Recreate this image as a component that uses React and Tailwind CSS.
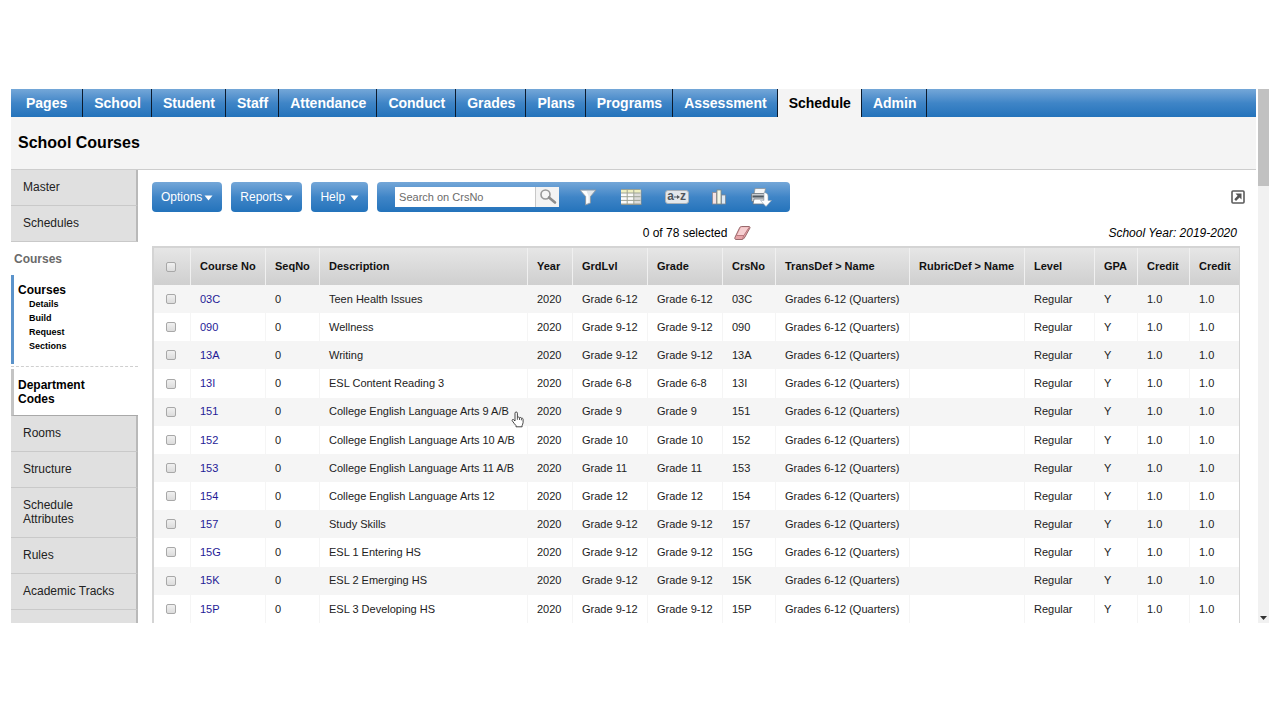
import React from "react";

const TABS = ["Pages", "School", "Student", "Staff", "Attendance", "Conduct", "Grades", "Plans", "Programs", "Assessment", "Schedule", "Admin"];

const COLUMNS = [
  ["Course No", "w-[75px]"],
  ["SeqNo", "w-[54px]"],
  ["Description", ""],
  ["Year", "w-[45px]"],
  ["GrdLvl", "w-[75px]"],
  ["Grade", "w-[75px]"],
  ["CrsNo", "w-[53px]"],
  ["TransDef > Name", "w-[134px]"],
  ["RubricDef > Name", "w-[115px]"],
  ["Level", "w-[70px]"],
  ["GPA", "w-[43px]"],
  ["Credit", "w-[52px]"],
  ["Credit", "w-[49px]"],
];

const COURSES = [
  ["03C", "Teen Health Issues", "Grade 6-12"],
  ["090", "Wellness", "Grade 9-12"],
  ["13A", "Writing", "Grade 9-12"],
  ["13I", "ESL Content Reading 3", "Grade 6-8"],
  ["151", "College English Language Arts 9 A/B", "Grade 9"],
  ["152", "College English Language Arts 10 A/B", "Grade 10"],
  ["153", "College English Language Arts 11 A/B", "Grade 11"],
  ["154", "College English Language Arts 12", "Grade 12"],
  ["157", "Study Skills", "Grade 9-12"],
  ["15G", "ESL 1 Entering HS", "Grade 9-12"],
  ["15K", "ESL 2 Emerging HS", "Grade 9-12"],
  ["15P", "ESL 3 Developing HS", "Grade 9-12"],
];

const BLUE = "bg-linear-to-b from-[#74a7d8] via-[#3f85c7] via-50% to-[#2373bb]";

function TopNav() {
  return (
    <nav className={`flex h-7 shrink-0 ${BLUE}`}>
      {TABS.map((tab, i) => (
        <a
          key={tab}
          href="#"
          aria-current={tab === "Schedule" ? "page" : undefined}
          className={`flex items-center border-r border-[#0b1a2c] text-sm font-bold ${i === 0 ? "px-[15px]" : "pr-[10px] pl-[11px]"} ${
            tab === "Schedule" ? "bg-[#f4f4f4] text-black" : "text-white"
          }`}
        >
          {tab}
        </a>
      ))}
    </nav>
  );
}

function SideItem({ children, pad = "pr-10" }) {
  return (
    <a href="#" className={`block shrink-0 border-r-2 border-b border-r-[#b9b9b9] border-b-[#c9c9c9] bg-[#e0e0e0] pt-[10px] pb-[11px] pl-3 text-xs leading-[14px] text-[#222] ${pad}`}>
      {children}
    </a>
  );
}

function Sidebar() {
  return (
    <aside className="flex w-[127px] shrink-0 flex-col overflow-hidden">
      <SideItem>Master</SideItem>
      <SideItem>Schedules</SideItem>
      <h2 className="shrink-0 pt-[10px] pb-[9px] pl-[3px] text-xs leading-[14px] font-bold text-[#6a6a6a]">Courses</h2>
      <div className="shrink-0 border-l-[3px] border-[#5b93cb] pt-2 pb-[11px] pl-1 font-bold text-black">
        <a href="#" className="block text-xs leading-[14px]">Courses</a>
        <ul className="pl-[11px] text-[9px] leading-[14px]">
          {["Details", "Build", "Request", "Sections"].map((s) => (
            <li key={s}><a href="#">{s}</a></li>
          ))}
        </ul>
      </div>
      <div className="my-[2px] shrink-0 border-b border-dashed border-[#cfcfcf]" />
      <div className="shrink-0 border-b border-l-[3px] border-b-[#a9a9a9] border-l-[#c4c4c4] py-[9px] pr-8 pl-1">
        <a href="#" className="block text-xs leading-[14px] font-bold text-black">Department Codes</a>
      </div>
      <SideItem>Rooms</SideItem>
      <SideItem>Structure</SideItem>
      <SideItem>Schedule Attributes</SideItem>
      <SideItem>Rules</SideItem>
      <SideItem pad="pr-0">Academic Tracks</SideItem>
      <div className="grow border-r-2 border-[#b9b9b9] bg-[#e0e0e0]" />
    </aside>
  );
}

function MenuButton({ children, gap }) {
  return (
    <button type="button" className={`flex h-[30px] items-center rounded-[4px] px-[9px] text-xs text-white ${gap} ${BLUE}`}>
      {children}
      <svg width="9" height="6" viewBox="0 0 9 6" className="mt-[2px]" aria-hidden="true">
        <path d="M0.500 0.500h8L4.500 5.500z" fill="#fff" />
      </svg>
    </button>
  );
}

function FilterIcon() {
  return (
    <svg width="18" height="18" viewBox="0 0 18 18">
      <path d="M1 2h16l-5.500 6.500v6.500l-5 2v-8.500z" fill="#e4e8ec" stroke="#8b9aa8" strokeWidth="1" strokeLinejoin="round" />
      <path d="M2.500 3h5l2 5v6.500l-2 .8v-7z" fill="#fff" />
    </svg>
  );
}

function GridIcon() {
  return (
    <svg width="22" height="18" viewBox="0 0 22 18">
      <rect x="1.500" y="2" width="20" height="15" fill="#8a8f8c" />
      <rect x="1" y="1.500" width="19.500" height="14.500" fill="#fbfbfa" />
      <rect x="1" y="1.500" width="19.500" height="3.500" fill="#eff0c0" />
      <rect x="14" y="5" width="6.500" height="11" fill="#dcdcda" />
      <path d="M1 1.500h19.500M1 5h19.500M1 8.700h19.500M1 12.400h19.500M1 16h19.500M7.200 1.500v14.500M13.800 1.500v14.500" stroke="#9da394" strokeWidth="1" fill="none" />
    </svg>
  );
}

function ChartIcon() {
  return (
    <svg width="16" height="18" viewBox="0 0 16 18">
      <rect x="1.500" y="4.500" width="4" height="11.500" fill="#f5e3e3" stroke="#8f8b8f" strokeWidth=".8" />
      <rect x="6" y="2" width="4" height="14" fill="#f4f7e6" stroke="#858b80" strokeWidth=".8" />
      <rect x="10.500" y="7" width="4" height="9" fill="#dce9f5" stroke="#7f8790" strokeWidth=".8" />
    </svg>
  );
}

function PrintIcon() {
  return (
    <svg width="22" height="20" viewBox="0 0 22 20">
      <path d="M5 1.500h10.500l-1.200 6H4z" fill="#f5f6f7" stroke="#8d949b" strokeWidth=".8" />
      <rect x="1.500" y="6.500" width="16" height="8" rx="1.200" fill="#c7ccd1" stroke="#68717a" strokeWidth=".8" />
      <path d="M2.500 9.500h12" stroke="#4e5861" strokeWidth="2" />
      <path d="M4 12h10l1 5H3z" fill="#fff" stroke="#6e767e" strokeWidth=".8" />
      <path d="M14 5.500c2.500.3 4 1.500 4 3.500v4.500h3.500L16 19.500l-5.500-6H14z" fill="#fff" stroke="#9aa6b2" strokeWidth=".6" />
    </svg>
  );
}

function Toolbar() {
  return (
    <div className="flex items-center pt-3 pr-[11px] pl-[14px]">
      <div className="flex gap-[9px]">
        <MenuButton gap="gap-[2px]">Options</MenuButton>
        <MenuButton gap="gap-[2px]">Reports</MenuButton>
        <MenuButton gap="gap-[5px]">Help</MenuButton>
        <div className={`flex h-[30px] w-[413px] items-center rounded-[4px] px-[18px] ${BLUE}`}>
          <input type="text" aria-label="Search on CrsNo" placeholder="Search on CrsNo" className="h-5 w-[140px] bg-white px-1 text-[11px] leading-4 text-black outline-none placeholder:text-[#6b6b6b]" />
          <button type="button" aria-label="Search" className="flex h-5 w-6 items-center justify-center border-l border-[#c8c8c8] bg-[#f3f3f3]">
            <svg width="18" height="16" viewBox="0 0 18 16">
              <circle cx="6.500" cy="5.500" r="4.500" fill="#f7f7f7" stroke="#999" strokeWidth="1.600" />
              <path d="M10 8.500l6 5" stroke="#8d8d8d" strokeWidth="2.600" strokeLinecap="round" />
            </svg>
          </button>
          <div className="flex grow items-center justify-between pl-5">
            <button type="button" aria-label="Filter"><FilterIcon /></button>
            <button type="button" aria-label="Field set"><GridIcon /></button>
            <button type="button" aria-label="Sort order" className="flex h-[14px] w-6 items-center justify-center rounded-[3px] border border-[#a9b1b8] bg-[#e3e7eb] text-xs leading-none font-bold text-[#50565c]">
              <span className="pb-[2px]">a</span>
              <svg width="6" height="4" viewBox="0 0 6 4"><path d="M0 1.500h3V0L6 2 3 4V2.500H0z" fill="#50565c" /></svg>
              <span className="pb-[2px]">z</span>
            </button>
            <button type="button" aria-label="Quick chart"><ChartIcon /></button>
            <button type="button" aria-label="Quick print"><PrintIcon /></button>
          </div>
        </div>
      </div>
      <button type="button" aria-label="Open in new window" className="ml-auto">
        <svg width="14" height="14" viewBox="0 0 14 14">
          <rect x="1" y="1" width="12" height="12" rx="1" fill="#fff" stroke="#5b5b5b" strokeWidth="1.600" />
          <path d="M4.500 3.500h6v6L8.500 7.600 5 11 3.300 9.300 6.600 5.700z" fill="#555" />
        </svg>
      </button>
    </div>
  );
}

function Check({ label }) {
  return (
    <input
      type="checkbox"
      aria-label={label}
      className="block size-[10px] appearance-none rounded-[2px] border border-[#a8a8a8] bg-linear-to-b from-[#f0f0f0] to-[#dcdcdc]"
    />
  );
}

function HandCursor() {
  return (
    <svg width="13" height="17" viewBox="0 0 13 17" className="absolute top-[6px] left-full ml-[2px]" aria-hidden="true">
      <path
        d="M4 10V2.200a1.200 1.200 0 0 1 2.400 0V6.500c.4-.7 1.900-.6 2.100.3.500-.6 1.800-.4 1.900.5.700-.4 1.700 0 1.700 1v3.200c0 1.300-.8 2-1 3.100v1.200H5V14.600C3.900 13.400 2.300 11.400 1.200 9.700.7 8.800 1.900 8 2.700 8.700z"
        fill="#fff"
        stroke="#333"
        strokeWidth=".9"
        strokeLinejoin="round"
      />
      <path d="M6.400 6.500v2.300M8.500 7v2M10.400 7.500v1.800" stroke="#333" strokeWidth=".8" />
    </svg>
  );
}

function CourseTable() {
  return (
    <table className="h-full w-full table-fixed border-separate border-spacing-0 border-t-2 border-r border-l-2 border-[#d4d4d4] text-left text-[11px] whitespace-nowrap">
      <colgroup>
        <col className="w-[37px]" />
        {COLUMNS.map(([, width], i) => <col key={i} className={width} />)}
      </colgroup>
      <thead>
        <tr className="h-[37px] text-[#111]">
          <th className="border-r border-[#f0f0f0] bg-linear-to-b from-[#e6e6e6] to-[#cfcfcf] pl-3"><Check label="Select all" /></th>
          {COLUMNS.map(([name], i) => (
            <th key={i} scope="col" className="border-r border-[#f0f0f0] bg-linear-to-b from-[#e6e6e6] to-[#cfcfcf] pl-[9px] font-bold last:border-r-0">{name}</th>
          ))}
        </tr>
      </thead>
      <tbody className="text-[#222]">
        {COURSES.map(([no, description, grade]) => (
          <tr key={no} className="h-7 odd:bg-[#f5f5f5] even:bg-white">
            <td className="border-r border-[#f5f5f5] pl-3"><Check label={`Select ${no}`} /></td>
            <td className="border-r border-[#f5f5f5] pl-[9px]"><a href="#" className="text-[#1f1a96]">{no}</a></td>
            {["0", description, "2020", grade, grade, no, "Grades 6-12 (Quarters)", "", "Regular", "Y", "1.0", "1.0"].map((value, i) => (
              <td key={i} className="border-r border-[#f5f5f5] pl-[9px] last:border-r-0">
                {i === 1 && no === "151" ? <span className="relative">{value}<HandCursor /></span> : value}
              </td>
            ))}
          </tr>
        ))}
      </tbody>
    </table>
  );
}

export default function App() {
  return (
    <div className="flex h-screen overflow-hidden bg-white pt-[89px] pr-[11px] pb-[97px] pl-[11px] font-['Liberation_Sans',Arial,sans-serif] text-black">
      <div className="flex min-w-0 grow flex-col">
        <TopNav />
        <header className="flex h-[53px] shrink-0 items-center border-b border-[#cdcdcd] bg-[#f4f4f4] pl-[7px]">
          <h1 className="text-base font-bold">School Courses</h1>
        </header>
        <div className="flex min-h-0 grow">
          <Sidebar />
          <main className="flex min-w-0 grow flex-col">
            <Toolbar />
            <div className="grid h-[34px] shrink-0 grid-cols-3 items-center pt-2 pr-4 pl-[14px] text-xs">
              <div className="col-start-2 flex items-center justify-center gap-[7px] pl-[2px]">
                <span>0 of 78 selected</span>
                <button type="button" aria-label="Clear selection">
                  <svg width="17" height="16" viewBox="0 0 17 16" className="block">
                    <path d="M7.500 1.500h7.500c.9 0 1.300.8.900 1.600L11.500 11c-.6 1.200-2 3.500-3.200 3.500H2c-1.200 0-1.500-1.200-1-2.200L5.500 3c.4-.9 1-1.500 2-1.500z" fill="#e6a3a7" stroke="#8d5c60" strokeWidth=".9" />
                    <path d="M7.500 2.300h7L10 10H3.200L6.500 3.200z" fill="#f6cfd1" />
                    <path d="M2.500 10.500h7.300L15 2.700M9.800 10.500l-1.300 3.500" stroke="#a8696e" strokeWidth=".7" fill="none" />
                  </svg>
                </button>
              </div>
              <p className="pr-[3px] text-right italic">School Year: 2019-2020</p>
            </div>
            <div className="min-h-0 grow overflow-hidden pr-4 pl-[14px]">
              <CourseTable />
            </div>
          </main>
        </div>
      </div>
      <div className="ml-[2px] flex w-[11px] shrink-0 flex-col items-center justify-between bg-[#f1f1f1]">
        <div className="h-[97px] w-full bg-[#c1c1c1]" />
        <svg width="7" height="4" viewBox="0 0 7 4" className="mb-[3px]" aria-hidden="true"><path d="M0 0h7L3.500 4z" fill="#333" /></svg>
      </div>
    </div>
  );
}
